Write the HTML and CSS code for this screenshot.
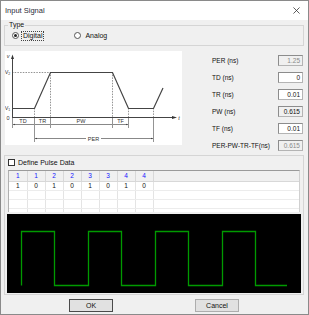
FILE: index.html
```html
<!DOCTYPE html>
<html lang="en">
<head>
  <meta charset="UTF-8" />
  <meta name="viewport" content="width=device-width, initial-scale=1.0"/>
  <title>Input Signal</title>
  <link rel="stylesheet" href="styles.css">
</head>
<body>
  <div class="dialog">
    <div class="titlebar">
      <span class="title">Input Signal</span>
      <svg class="close" viewBox="0 0 8 8" width="8" height="8"><path d="M0.5 0.5L7.5 7.5M7.5 0.5L0.5 7.5"/></svg>
    </div>

    <div class="content">
      <fieldset class="type-group">
        <legend>Type</legend>
        <div class="type-row">
          <div class="radio checked"><span class="dot"></span><span class="caption focus">Digital</span></div>
          <div class="radio"><span class="dot"></span><span class="caption">Analog</span></div>
        </div>
      </fieldset>

      <div class="params">
        <div class="diagram">
          <svg viewBox="5 51 177 94" width="177" height="94">
            <defs>
              <marker id="arr" viewBox="0 0 4 4" refX="4" refY="2" markerWidth="3" markerHeight="3" orient="auto-start-reverse">
                <path d="M0 0.5L4 2L0 3.5z" fill="#444"/>
              </marker>
            </defs>
            <path class="dash" d="M12 72.5H50M34.5 108V117M50.5 72V117M112.5 72V117M128.5 108V117M153.5 108V117"/>
            <path class="ext" d="M12.5 117V128M34.5 117V142M50.5 117V128M112.5 117V128M128.5 117V128M153.5 117V142"/>
            <path class="axis" d="M12.5 117V57M12 117.5H174"/>
            <path class="head" d="M11 59L12.5 54.5L14 59z M172 116L177 117.5L172 119z"/>
            <path class="wave" d="M12 108.5H34.5L50.5 72.5H112.5L128.5 108.5H153.5L163 88"/>
            <path class="dim" d="M13 124.5H34M35 124.5H50M51 124.5H112M113 124.5H128" marker-start="url(#arr)" marker-end="url(#arr)"/>
            <path class="dim" d="M35 138.5H86" marker-start="url(#arr)"/>
            <path class="dim" d="M101 138.5H153" marker-end="url(#arr)"/>
            <g class="lbl">
              <text x="8" y="58" class="it">v</text>
              <text x="7.5" y="74">V<tspan font-size="3.5" dy="1">2</tspan></text>
              <text x="7.5" y="110">V<tspan font-size="3.5" dy="1">1</tspan></text>
              <text x="8" y="119.5">0</text>
              <text x="179" y="119.5" class="it">t</text>
              <text x="23" y="122.5">TD</text>
              <text x="42.5" y="122.5">TR</text>
              <text x="81" y="122.5">PW</text>
              <text x="120.5" y="122.5">TF</text>
              <text x="93.5" y="140.5">PER</text>
            </g>
          </svg>
        </div>
        <div class="fields">
          <div class="field"><span>PER (ns)</span><span class="box off">1.25</span></div>
          <div class="field"><span>TD (ns)</span><span class="box">0</span></div>
          <div class="field"><span>TR (ns)</span><span class="box">0.01</span></div>
          <div class="field"><span>PW (ns)</span><span class="box ro">0.615</span></div>
          <div class="field"><span>TF (ns)</span><span class="box">0.01</span></div>
          <div class="field"><span>PER-PW-TR-TF(ns)</span><span class="box off">0.615</span></div>
        </div>
      </div>

      <div class="pulse-group">
        <div class="check"><span class="tick"></span>Define Pulse Data</div>
        <div class="grid-wrap">
          <table class="grid">
            <tr><th>1</th><th>1</th><th>2</th><th>2</th><th>3</th><th>3</th><th>4</th><th>4</th><th class="fill"></th></tr>
            <tr><td>1</td><td>0</td><td>1</td><td>0</td><td>1</td><td>0</td><td>1</td><td>0</td><td class="fill"></td></tr>
            <tr><td></td><td></td><td></td><td></td><td></td><td></td><td></td><td></td><td class="fill"></td></tr>
            <tr><td></td><td></td><td></td><td></td><td></td><td></td><td></td><td></td><td class="fill"></td></tr>
            <tr><td></td><td></td><td></td><td></td><td></td><td></td><td></td><td></td><td class="fill"></td></tr>
          </table>
        </div>
        <div class="scope">
          <svg viewBox="7 214 295 79" width="295" height="79">
            <path d="M21.5 285.5V231.5H54.5V285.5H88.5V231.5H121.5V285.5H155.5V231.5H188.5V285.5H222.5V231.5H255.5V285.5H287"/>
          </svg>
        </div>
      </div>

      <div class="buttons">
        <button class="btn default">OK</button>
        <button class="btn">Cancel</button>
      </div>
    </div>
  </div>
</body>
</html>
```

FILE: styles.css
```css
* {
  box-sizing: border-box;
}

body {
  margin: 0;
  font-family: "Liberation Sans", Arial, sans-serif;
  font-size: 7px;
  color: #111;
  background: #fff;
}

.dialog {
  width: 309px;
  height: 315px;
  border: 1px solid #8a8a8a;
  background: #f0f0f0;
}

.titlebar {
  height: 19px;
  background: #fff;
  display: flex;
  align-items: center;
  justify-content: space-between;
  padding: 0 8px 0 4px;
}

.title {
  font-size: 7.5px;
  color: #2a2a3a;
}

.close {
  width: 7px;
  height: 7px;
  stroke: #333;
  stroke-width: 0.9;
}

.content {
  padding: 0 4px 0 3px;
}

/* type group */
.type-group {
  margin: 1px 0 0;
  padding: 2px 7px 5px;
  border: 1px solid #d5d5d5;
  min-width: 0;
}

.type-group legend {
  margin-left: -4px;
  padding: 0 1px;
  line-height: 8px;
}

.type-row {
  display: flex;
  align-items: center;
  height: 9px;
}

.radio {
  display: flex;
  align-items: center;
}

.radio + .radio {
  margin-left: 30px;
}

.dot {
  flex: none;
  width: 7px;
  height: 7px;
  margin-right: 2px;
  border: 1px solid #555;
  border-radius: 50%;
  background: #fff;
  display: flex;
  align-items: center;
  justify-content: center;
}

.radio.checked .dot::after {
  content: "";
  width: 3px;
  height: 3px;
  border-radius: 50%;
  background: #222;
}

.caption {
  padding: 0 1px;
  line-height: 8px;
  border: 1px solid transparent;
}

.caption.focus {
  border: 1px dotted #444;
}

/* parameters */
.params {
  display: flex;
  margin-top: 5px;
  height: 94px;
}

.diagram {
  margin-left: 1px;
  width: 177px;
  background: #fff;
}

.diagram svg {
  display: block;
}

.dash {
  fill: none;
  stroke: #777;
  stroke-width: 0.8;
  stroke-dasharray: 1.5 1.2;
}

.ext {
  fill: none;
  stroke: #666;
  stroke-width: 0.7;
}

.axis {
  fill: none;
  stroke: #444;
  stroke-width: 1;
}

.head {
  fill: #333;
}

.wave {
  fill: none;
  stroke: #444;
  stroke-width: 1.2;
}

.dim {
  fill: none;
  stroke: #555;
  stroke-width: 0.7;
}

.lbl text {
  font-family: "Liberation Sans", Arial, sans-serif;
  font-size: 5.5px;
  fill: #333;
  text-anchor: middle;
}

.lbl .it {
  font-style: italic;
}

.fields {
  flex: 1;
  padding: 1px 1px 0 30px;
}

.field {
  display: flex;
  align-items: center;
  justify-content: space-between;
  height: 17px;
  font-size: 6.5px;
}

.box {
  width: 25px;
  height: 11px;
  border: 1px solid #b4b4b4;
  border-top-color: #8c8c8c;
  border-left-color: #8c8c8c;
  background: #fff;
  text-align: right;
  padding-right: 2px;
  line-height: 9px;
  font-size: 6.5px;
}

.box.off {
  background: #f0f0f0;
  color: #8a8a8a;
}

.box.ro {
  background: #f0f0f0;
}

/* pulse data */
.pulse-group {
  margin-top: 10px;
  border: 1px solid #d5d5d5;
  padding: 3px 2px 1px;
}

.check {
  display: flex;
  align-items: center;
  gap: 3px;
  height: 7px;
  margin-left: 1px;
}

.tick {
  width: 7px;
  height: 7px;
  border: 1px solid #333;
  background: #fff;
}

.grid-wrap {
  margin: 4px 1px 0;
  height: 42px;
  overflow: hidden;
  background: #fff;
  border-top: 1px solid #9a9a9a;
  border-left: 1px solid #b0b0b0;
  border-right: 1px solid #d0d0d0;
}

.grid {
  width: 100%;
  border-collapse: collapse;
  table-layout: fixed;
  font-size: 6.5px;
}

.grid th,
.grid td {
  width: 18px;
  padding: 0;
  text-align: center;
  border-right: 1px solid #e4e4e4;
  border-bottom: 1px solid #ececec;
}

.grid th {
  height: 10px;
  background: #f0f0f0;
  color: #1515ff;
  font-weight: normal;
  border-right-color: #d8d8d8;
  border-bottom-color: #d8d8d8;
}

.grid td {
  height: 9px;
}

.grid .fill {
  width: auto;
  border-right: none;
}

.scope {
  margin-top: 2px;
  height: 79px;
  background: #000;
}

.scope svg {
  display: block;
}

.scope path {
  fill: none;
  stroke: #009a00;
  stroke-width: 1.3;
}

/* buttons */
.buttons {
  display: flex;
  justify-content: center;
  gap: 82px;
  margin-top: 4px;
}

.btn {
  width: 44px;
  height: 13px;
  padding: 0;
  font-family: inherit;
  font-size: 7px;
  color: #111;
  background: #e1e1e1;
  border: 1px solid #adadad;
}

.btn.default {
  border-color: #4a4a4a;
}
```
